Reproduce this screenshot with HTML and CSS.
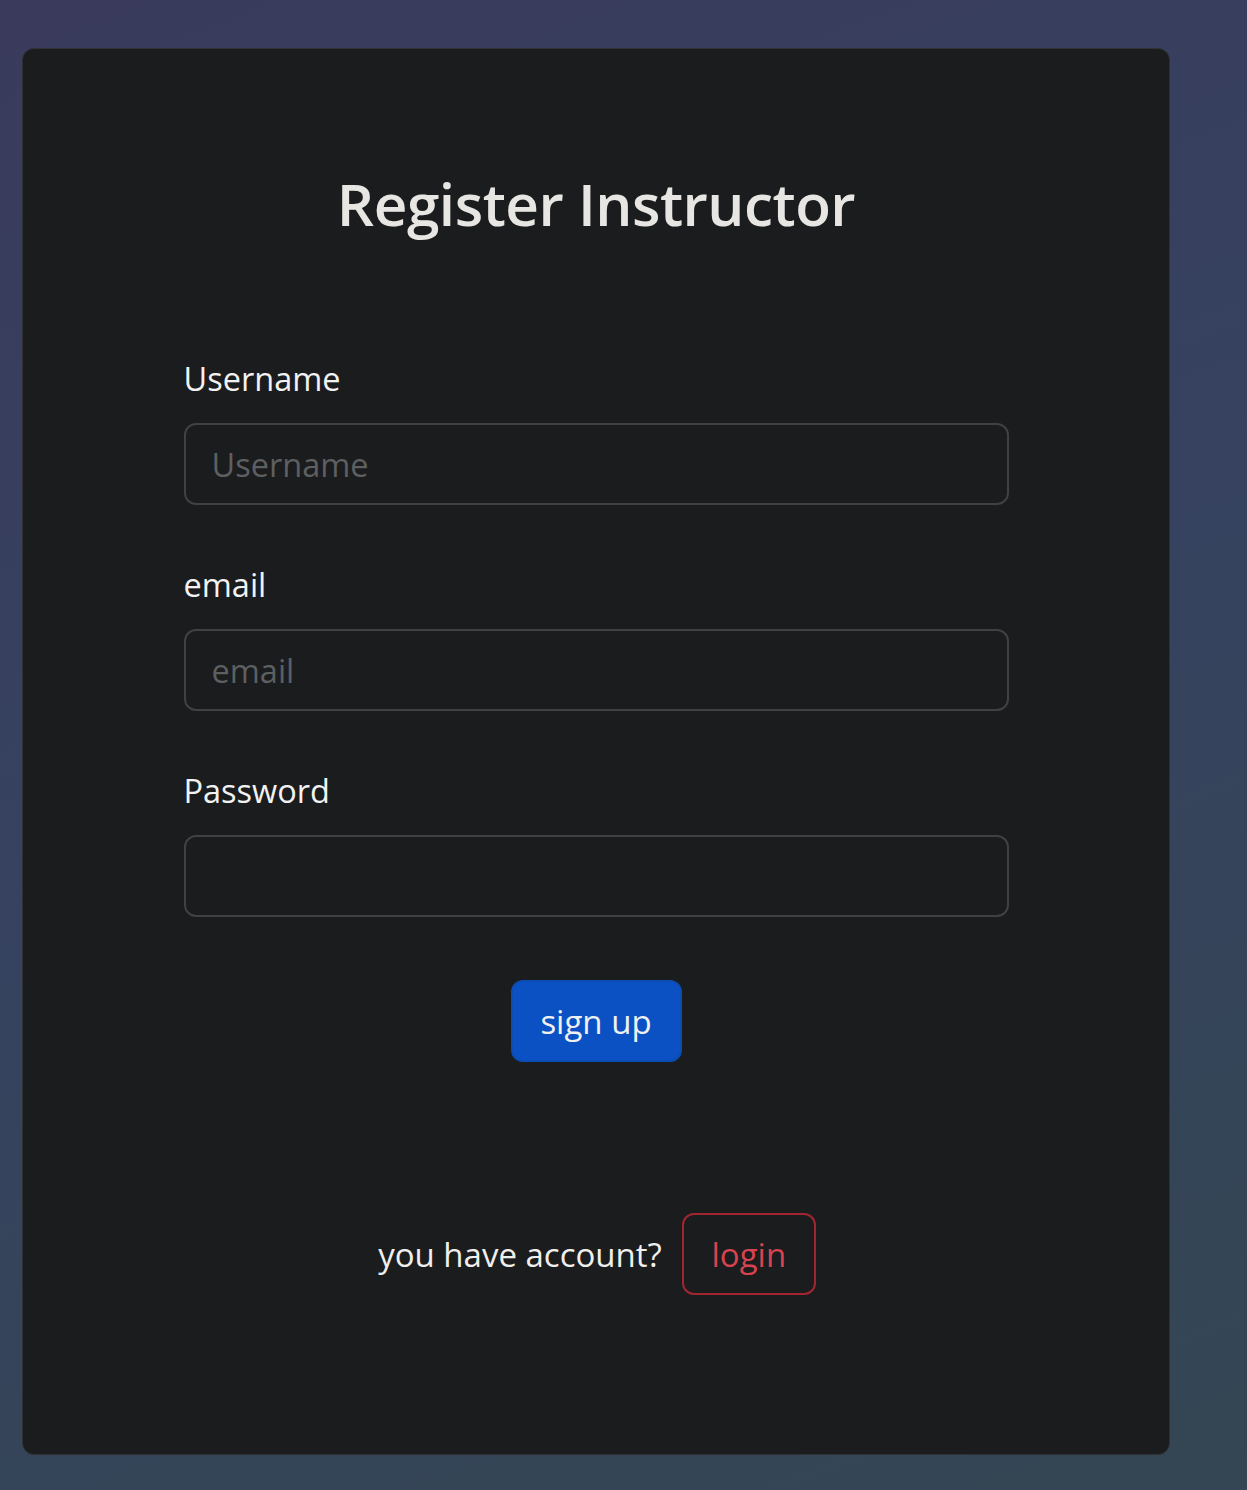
FILE: index.html
```html
<!DOCTYPE html>
<html lang="en">
<head>
<meta charset="utf-8">
<title>Register Instructor</title>
<link rel="stylesheet" href="styles.css">
</head>
<body>
<main class="card">
  <h1 class="title">Register Instructor</h1>
  <form class="form">
    <div class="field">
      <label class="label" for="username">Username</label>
      <input class="input" id="username" type="text" placeholder="Username">
    </div>
    <div class="field">
      <label class="label" for="email">email</label>
      <input class="input" id="email" type="email" placeholder="email">
    </div>
    <div class="field">
      <label class="label" for="password">Password</label>
      <input class="input" id="password" type="password">
    </div>
    <div class="actions">
      <button class="btn btn-primary" type="button">sign up</button>
    </div>
  </form>
  <div class="login-row">
    <span class="login-text">you have account?</span>
    <button class="btn btn-outline" type="button">login</button>
  </div>
</main>
</body>
</html>
```

FILE: styles.css
```css
html, body {
  margin: 0;
  padding: 0;
}
body {
  min-height: 1490px;
  background: linear-gradient(160deg, #3a3b5c 0%, #364260 45%, #344653 100%);
  font-family: "Open Sans", "Noto Sans", "DejaVu Sans", sans-serif;
  color: #e8e6e3;
  padding: 48px 0 0 22px;
  box-sizing: border-box;
}
.card {
  box-sizing: border-box;
  width: 1148px;
  height: 1407px;
  background: #1b1c1e;
  border: 1px solid #303134;
  border-radius: 12px;
  padding-top: 114px;
  display: flex;
  flex-direction: column;
  align-items: center;
}
.title {
  margin: 0;
  font-size: 58.5px;
  font-weight: 600;
  line-height: 80px;
  color: #e8e6e3;
  letter-spacing: -0.5px;
}
.form {
  width: 825px;
  margin-top: 110px;
  display: flex;
  flex-direction: column;
}
.field {
  display: flex;
  flex-direction: column;
  margin-bottom: 54px;
}
.label {
  font-size: 32.5px;
  line-height: 52px;
  margin-bottom: 18px;
  color: #f2f2f2;
}
.input {
  box-sizing: border-box;
  height: 82px;
  width: 100%;
  background: #1b1c1e;
  border: 2px solid #3f4144;
  border-radius: 12px;
  padding: 0 26px;
  font-family: inherit;
  font-size: 32.5px;
  color: #e8e6e3;
  outline: none;
}
.input::placeholder {
  color: #5d5f61;
}
.actions {
  display: flex;
  justify-content: center;
  margin-top: 9px;
}
.btn {
  box-sizing: border-box;
  height: 82px;
  border-radius: 12px;
  font-family: inherit;
  font-size: 33px;
  padding: 0;
  cursor: pointer;
}
.btn-primary {
  width: 171px;
  background: #0b51c4;
  border: 2px solid #0c4db5;
  color: #f0f0f0;
}
.login-row {
  margin-top: 151px;
  display: flex;
  align-items: center;
  gap: 20px;
  padding-left: 2px;
}
.login-text {
  font-size: 33px;
  color: #f0efed;
}
.btn-outline {
  width: 134px;
  background: transparent;
  border: 2px solid #a2262f;
  color: #d8434f;
}
```
